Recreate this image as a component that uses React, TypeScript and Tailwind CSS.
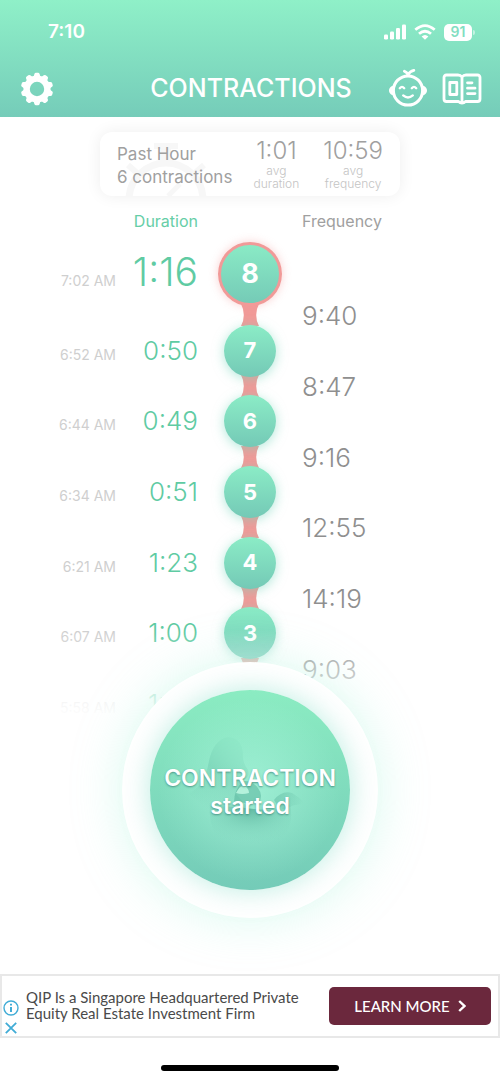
import React from "react";

type Contraction = {
  id: number;
  time: string;
  duration: string;
  frequency: string;
};

const contractions: Contraction[] = [
  { id: 8, time: "7:02 AM", duration: "1:16", frequency: "9:40" },
  { id: 7, time: "6:52 AM", duration: "0:50", frequency: "8:47" },
  { id: 6, time: "6:44 AM", duration: "0:49", frequency: "9:16" },
  { id: 5, time: "6:34 AM", duration: "0:51", frequency: "12:55" },
  { id: 4, time: "6:21 AM", duration: "1:23", frequency: "14:19" },
  { id: 3, time: "6:07 AM", duration: "1:00", frequency: "9:03" },
  { id: 2, time: "5:58 AM", duration: "1:04", frequency: "" },
];

const teeth = [0, 36, 72, 108, 144, 180, 216, 252, 288, 324];

const GearIcon = () => (
  <svg viewBox="0 0 34 34" className="size-[34px]" aria-hidden="true">
    <circle cx="17" cy="17" r="10.4" fill="none" stroke="#fff" strokeWidth="6.4" />
    {teeth.map((deg) => (
      <path
        key={deg}
        d="M13.2 6 L14.4 2 Q14.8 0.8 16 0.8 H18 Q19.2 0.8 19.6 2 L20.8 6 Z"
        fill="#fff"
        transform={`rotate(${deg} 17 17)`}
      />
    ))}
  </svg>
);

const BabyIcon = () => (
  <svg
    viewBox="0 0 40 40"
    className="size-10"
    fill="none"
    stroke="#fff"
    strokeLinecap="round"
    strokeLinejoin="round"
    aria-hidden="true"
  >
    <circle cx="20" cy="21.5" r="14.6" strokeWidth="3" />
    <path d="M5 17.5 Q1.8 18.8 1.8 21.5 T5 25.5 Z" fill="#fff" strokeWidth="1.6" />
    <path d="M35 17.5 Q38.2 18.8 38.2 21.5 T35 25.5 Z" fill="#fff" strokeWidth="1.6" />
    <path d="M20 6 Q19.6 3.6 16.4 2.2 M20 6 Q21.6 2.4 25.8 1.4" strokeWidth="2.8" />
    <path d="M11.8 19.2 Q14 16.6 16.2 19.2 M23.8 19.2 Q26 16.6 28.2 19.2" strokeWidth="2.4" />
    <path d="M15.2 26.4 Q20 30.4 24.8 26.4" strokeWidth="2.4" />
  </svg>
);

const GuideIcon = () => (
  <svg
    viewBox="0 0 40 32"
    className="h-8 w-10"
    fill="none"
    stroke="#fff"
    strokeLinecap="round"
    strokeLinejoin="round"
    aria-hidden="true"
  >
    <path
      d="M20 4 Q18.5 2 16 2 H4.5 Q2 2 2 4.5 V26 Q2 28.5 4.5 28.5 H16.5 Q18 30 20 30 T23.5 28.5 H35.5 Q38 28.5 38 26 V4.5 Q38 2 35.5 2 H24 Q21.5 2 20 4 Z M20 4 V29"
      strokeWidth="2.8"
    />
    <rect x="7.8" y="9.5" width="7" height="12" strokeWidth="2.8" />
    <path d="M25.5 9.8 H30 M25.5 15.2 H33 M25.5 20.6 H33" strokeWidth="2.8" />
  </svg>
);

const StatusIcons = () => (
  <div className="flex items-center gap-2 text-white">
    <svg viewBox="0 0 22 16" className="h-4 w-[22px]" fill="#fff" aria-hidden="true">
      <rect x="0" y="10.5" width="4" height="5" rx="1.2" />
      <rect x="6" y="7.5" width="4" height="8" rx="1.2" />
      <rect x="12" y="4" width="4" height="11.5" rx="1.2" />
      <rect x="18" y="0.5" width="4" height="15" rx="1.2" />
    </svg>
    <svg viewBox="0 0 22 16" className="h-4 w-[22px]" fill="none" stroke="#fff" aria-hidden="true">
      <path d="M1.3 5.8 Q11 -2.6 20.7 5.8" strokeWidth="2.8" />
      <path d="M5 9.8 Q11 4.6 17 9.8" strokeWidth="2.8" />
      <path d="M7.6 12.4 Q11 9.4 14.4 12.4 L11 15.8 Z" fill="#fff" stroke="none" />
    </svg>
    <div className="flex items-center gap-px">
      <span className="flex h-[17px] w-7 items-center justify-center rounded-[5px] bg-white text-sm font-semibold text-[#82dec1]">
        91
      </span>
      <span className="h-[5px] w-[2px] rounded-r bg-white/50" />
    </div>
  </div>
);

const Header = () => (
  <header className="bg-linear-to-b from-[#8ff0c8] to-[#75ccb9]">
    <div className="flex h-16 items-center justify-between pr-[25px] pl-12">
      <span className="text-[19px] font-semibold text-white">7:10</span>
      <StatusIcons />
    </div>
    <div className="grid h-[53px] grid-cols-[1fr_auto_1fr] items-center pr-[18px] pb-1 pl-5">
      <button type="button" aria-label="Settings" className="justify-self-start">
        <GearIcon />
      </button>
      <h1 className="text-[25px] font-medium text-white">CONTRACTIONS</h1>
      <div className="flex items-center justify-end gap-[14px]">
        <button type="button" aria-label="Baby">
          <BabyIcon />
        </button>
        <button type="button" aria-label="Guide">
          <GuideIcon />
        </button>
      </div>
    </div>
  </header>
);

const Summary = () => (
  <section className="relative mx-auto mt-[15px] flex h-16 w-[300px] items-center justify-between overflow-hidden rounded-xl bg-white px-[17px] text-[#a0a0a0] shadow-[0_0_16px_rgba(0,0,0,0.07)]">
    <svg
      viewBox="0 0 90 56"
      className="absolute bottom-0 left-[22px] h-14 w-[90px]"
      fill="none"
      stroke="#f7f7f7"
      aria-hidden="true"
    >
      <circle cx="44" cy="60" r="37" strokeWidth="7" />
      <path d="M32 6 H56 M6 25 L15 33 M82 25 L73 33" strokeWidth="6" />
      <path d="M44 6 V23" strokeWidth="10" />
      <path d="M46 56 L58 44" strokeWidth="5" />
    </svg>
    <div className="relative pt-[3px] text-[17px] leading-[23px]">
      <p>Past Hour</p>
      <p>6 contractions</p>
    </div>
    <div className="relative flex gap-6 text-center">
      <div>
        <p className="text-2xl leading-[26px] font-light">1:01</p>
        <p className="text-xs leading-[13px] font-light text-[#c4c4c4]">
          avg
          <br />
          duration
        </p>
      </div>
      <div>
        <p className="text-2xl leading-[26px] font-light">10:59</p>
        <p className="text-xs leading-[13px] font-light text-[#c4c4c4]">
          avg
          <br />
          frequency
        </p>
      </div>
    </div>
  </section>
);

const Connector = () => (
  <svg viewBox="0 0 20 32" className="h-8 w-5 shrink-0" aria-hidden="true">
    <path d="M1 5 Q3.8 10 3.8 16 T1 27 H19 Q16.2 22 16.2 16 T19 5 Z" fill="#f19a98" />
  </svg>
);

const Timeline = () => (
  <section className="relative">
    <div className="mt-[15px] grid grid-cols-[1fr_104px_1fr] text-base leading-5">
      <h2 className="text-right text-[#66cea7]">Duration</h2>
      <span />
      <h2 className="text-[#a0a0a0]">Frequency</h2>
    </div>
    <ol className="mt-[11px] flex h-[488px] flex-col">
      {contractions.map((item, index) => {
        const latest = index === 0;
        return (
          <React.Fragment key={item.id}>
            <li className="relative z-10 grid grid-cols-[1fr_100px_1fr] items-center">
              <div
                className={`flex items-baseline justify-end pr-[2px] ${
                  latest ? "pb-1" : ""
                }`}
              >
                <time className="text-sm text-[#cfcfcf]">{item.time}</time>
                <span
                  className={`w-[82px] text-right font-light text-[#5fcba3] ${
                    latest ? "text-[39px] leading-10" : "text-[26px] leading-10"
                  }`}
                >
                  {item.duration}
                </span>
              </div>
              <span
                className={`mx-auto flex items-center justify-center rounded-full bg-linear-to-b from-[#8becc6] to-[#74c9b6] font-bold text-white ${
                  latest
                    ? "size-16 border-[3px] border-[#f19a98] bg-origin-border text-[27px] shadow-[0_0_10px_rgba(241,154,152,0.45)]"
                    : "size-[52px] text-[22px] shadow-[0_2px_12px_rgba(117,214,188,0.55)]"
                }`}
              >
                {item.id}
              </span>
            </li>
            {item.frequency && (
              <li className="grid min-h-0 flex-1 grid-cols-[1fr_100px_1fr] items-center">
                <span />
                <span className="flex h-0 items-center justify-center">
                  <Connector />
                </span>
                <span className="flex h-0 items-center pt-px pl-[2px] text-[26px] font-light text-[#8f8f8f]">
                  {item.frequency}
                </span>
              </li>
            )}
          </React.Fragment>
        );
      })}
    </ol>
    <div className="absolute inset-x-0 bottom-0 z-20 h-28 bg-linear-to-b from-white/0 from-10% to-white to-90%" />
  </section>
);

const NursingArt = () => (
  <svg viewBox="0 0 200 200" className="absolute inset-0 size-full" aria-hidden="true">
    <defs>
      <linearGradient id="head" gradientUnits="userSpaceOnUse" x1="46" y1="112" x2="90" y2="50">
        <stop offset="0" stopColor="#5cb89f" stopOpacity="0" />
        <stop offset="0.5" stopColor="#5cb89f" stopOpacity="0.3" />
        <stop offset="1" stopColor="#7fdcbc" stopOpacity="0.15" />
      </linearGradient>
      <radialGradient id="body" cx="0.5" cy="0.12" r="0.75">
        <stop offset="0" stopColor="#4fa893" stopOpacity="0.7" />
        <stop offset="0.5" stopColor="#68c0a9" stopOpacity="0.3" />
        <stop offset="1" stopColor="#8adfc6" stopOpacity="0" />
      </radialGradient>
      <linearGradient id="hand" x1="0" y1="0" x2="1" y2="0.2">
        <stop offset="0" stopColor="#63bca4" stopOpacity="0.6" />
        <stop offset="1" stopColor="#63bca4" stopOpacity="0" />
      </linearGradient>
    </defs>
    <path
      d="M58 76 Q62 50 78 47 Q92 48 93 64 Q92 72 98 80 Q100 86 95 89 Q90 96 86 104 L100 120 Q78 130 60 124 Q50 112 38 104 Q54 96 58 76 Z"
      fill="url(#head)"
    />
    <path
      d="M60 116 Q84 116 104 119 Q130 122 140 114 Q146 142 122 156 Q98 168 76 156 Q58 142 60 116 Z"
      fill="url(#body)"
    />
    <path d="M93 91 Q102 90 108 98 Q114 106 108 114 L84 112 Q84 100 93 91 Z" fill="#59b49c" opacity="0.55" />
    <path d="M86 103 Q90 95 94 96 Q99 98 99 103 Q92 105 86 103 Z" fill="#b5f2dc" />
    <path d="M124 110 Q132 100 142 103 Q149 107 156 114 Q140 114 136 120 Q128 118 124 110 Z" fill="url(#hand)" />
  </svg>
);

const StartButton = () => (
  <div className="relative z-30 mx-auto -mt-[68px] flex size-64 items-center justify-center rounded-full bg-white shadow-[0_0_50px_rgba(143,240,210,0.34)]">
    <button
      type="button"
      className="relative size-[200px] rounded-full bg-[radial-gradient(circle_at_50%_50%,rgba(185,255,232,0.55),transparent_65%),linear-gradient(to_bottom,#8becc2,#74cbb8)] shadow-[0_0_28px_rgba(143,225,205,0.6)]"
    >
      <NursingArt />
      <span className="relative block pt-1 text-[23px] leading-7 font-semibold text-white [text-shadow:0_1px_2px_rgba(50,120,110,0.7)]">
        CONTRACTION
        <br />
        started
      </span>
    </button>
  </div>
);

const AdBanner = () => (
  <aside className="mt-auto flex h-16 items-center border-2 border-[#e8e8e8] bg-white pr-[7px] font-[Lato,sans-serif]">
    <div className="flex w-6 flex-col items-center gap-[6px] pt-[22px] pr-[6px]">
      <button type="button" aria-label="Ad information">
        <svg viewBox="0 0 16 16" className="size-4" fill="none" stroke="#41acd6" aria-hidden="true">
          <circle cx="8" cy="8" r="7" strokeWidth="1.4" />
          <path d="M8 7 V12 M8 3.8 V5.6" strokeWidth="2" />
        </svg>
      </button>
      <button type="button" aria-label="Close ad">
        <svg viewBox="0 0 12 12" className="size-3" stroke="#41acd6" aria-hidden="true">
          <path d="M0.8 0.8 L11.2 11.2 M11.2 0.8 L0.8 11.2" strokeWidth="1.8" />
        </svg>
      </button>
    </div>
    <p className="flex-1 pb-[2px] text-[15px] leading-4 text-[#4a4a4a]">
      QIP Is a Singapore Headquartered Private
      <br />
      Equity Real Estate Investment Firm
    </p>
    <a
      href="#learn-more"
      className="flex h-[38px] w-[162px] items-center justify-center gap-2 rounded-[5px] bg-[#6b283d] text-[15px] font-medium text-white"
    >
      LEARN MORE
      <svg viewBox="0 0 8 12" className="h-3 w-2" fill="none" stroke="#fff" aria-hidden="true">
        <path d="M1.2 1 L6.4 6 L1.2 11" strokeWidth="2.4" />
      </svg>
    </a>
  </aside>
);

const App = () => {
  return (
    <div className="flex min-h-screen flex-col bg-white font-[Inter,sans-serif]">
      <Header />
      <main>
        <Summary />
        <Timeline />
        <StartButton />
      </main>
      <AdBanner />
      <div className="flex h-11 items-center justify-center pt-4">
        <span className="h-[6px] w-[178px] rounded-full bg-black" />
      </div>
    </div>
  );
};

export default App;
